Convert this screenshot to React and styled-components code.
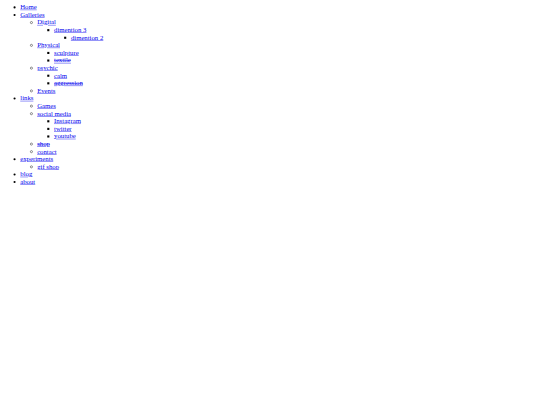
import React from "react";
import styled, { createGlobalStyle } from "styled-components";

const GlobalStyle = createGlobalStyle`
  html {
    background: #ffffff;
  }
  body {
    margin: 0;
    font-family: "Liberation Serif", "Times New Roman", serif;
    font-size: 16px;
  }
`;

const Viewport = styled.div`
  height: 100vh;
  overflow: hidden;
`;

// the reference is a 1280px wide page shown at 540px
const Page = styled.div`
  padding: 8px;
  transform: scale(0.421875);
  transform-origin: 0 0;
`;

const List = styled.ul`
  margin: 0;
  padding-left: 40px;
  line-height: 18px;
  list-style-type: ${(props) => props.$marker || "disc"};
`;

const Item = styled.li``;

const Link = styled.a`
  color: #0000ee;
  text-decoration: ${(props) => (props.$struck ? "underline line-through" : "underline")};
`;

const menu = [
  { label: "Home" },
  {
    label: "Galleries",
    children: [
      {
        label: "Digital",
        children: [{ label: "dimention 3", children: [{ label: "dimention 2" }] }],
      },
      {
        label: "Physical",
        children: [{ label: "sculpture" }, { label: "textile", struck: true }],
      },
      {
        label: "psychic",
        children: [{ label: "calm" }, { label: "aggression", struck: true }],
      },
      { label: "Events" },
    ],
  },
  {
    label: "links",
    children: [
      { label: "Games" },
      {
        label: "social media",
        children: [{ label: "Instagram" }, { label: "twitter" }, { label: "youtube" }],
      },
      { label: "shop", struck: true },
      { label: "contact" },
    ],
  },
  { label: "experiments", children: [{ label: "gif shop" }] },
  { label: "blog" },
  { label: "about" },
];

const markers = ["disc", "circle", "square", "square"];

function Menu({ items, depth }) {
  return (
    <List $marker={markers[depth]}>
      {items.map((item) => (
        <Item key={item.label}>
          <Link href="#" $struck={item.struck}>
            {item.label}
          </Link>
          {item.children && <Menu items={item.children} depth={depth + 1} />}
        </Item>
      ))}
    </List>
  );
}

export default function App() {
  return (
    <>
      <GlobalStyle />
      <Viewport>
        <Page>
          <Menu items={menu} depth={0} />
        </Page>
      </Viewport>
    </>
  );
}
